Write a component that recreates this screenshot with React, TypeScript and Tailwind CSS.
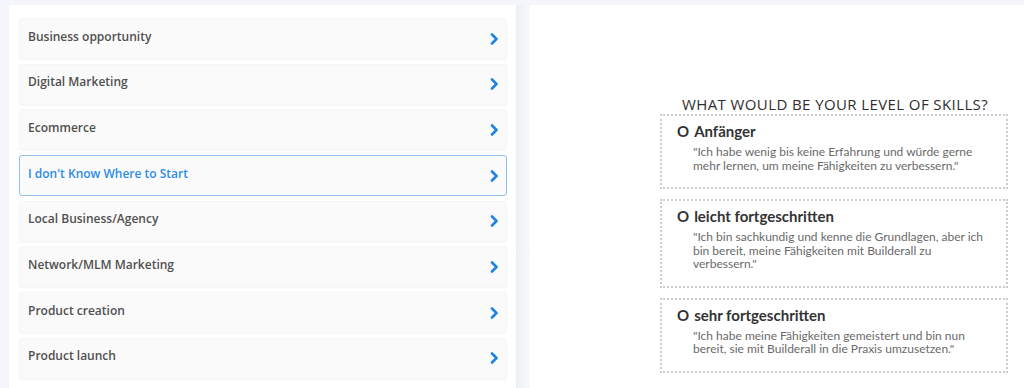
import React from "react";

const niches = [
  "Business opportunity",
  "Digital Marketing",
  "Ecommerce",
  "I don't Know Where to Start",
  "Local Business/Agency",
  "Network/MLM Marketing",
  "Product creation",
  "Product launch",
];

const levels = [
  {
    title: "Anfänger",
    text: "\"Ich habe wenig bis keine Erfahrung und würde gerne mehr lernen, um meine Fähigkeiten zu verbessern.\"",
  },
  {
    title: "leicht fortgeschritten",
    text: "\"Ich bin sachkundig und kenne die Grundlagen, aber ich bin bereit, meine Fähigkeiten mit Builderall zu verbessern.\"",
  },
  {
    title: "sehr fortgeschritten",
    text: "\"Ich habe meine Fähigkeiten gemeistert und bin nun bereit, sie mit Builderall in die Praxis umzusetzen.\"",
  },
];

function Chevron() {
  return (
    <svg width="9" height="12" viewBox="0 0 9 12" className="shrink-0">
      <polyline
        points="2,1.5 6.5,6 2,10.5"
        fill="none"
        stroke="#1f84e0"
        strokeWidth="2.6"
        strokeLinecap="round"
        strokeLinejoin="round"
      />
    </svg>
  );
}

function NicheItem({ label, active }: { label: string; active?: boolean }) {
  return (
    <div
      className={
        active
          ? "flex h-[41px] items-center justify-between rounded-[3px] border border-[#8fc0ee] bg-[#fbfbfb] pl-[8px] pr-[7px]"
          : "flex h-[41px] items-center justify-between rounded-[3px] border border-[#f6f6f6] bg-[#fafafa] pl-[8px] pr-[7px] shadow-[0_1px_2px_rgba(0,0,0,0.04)]"
      }
    >
      <span
        className={
          active
            ? "pb-[4px] text-[12px] font-semibold text-[#2d8ce6]"
            : "pb-[4px] text-[12px] font-semibold text-[#505050]"
        }
      >
        {label}
      </span>
      <Chevron />
    </div>
  );
}

export default function App() {
  return (
    <div
      className="flex h-[388px] w-[1024px] overflow-hidden bg-[#f4f6fb] pt-[5px]"
      style={{ fontFamily: "'Open Sans', Lato, sans-serif" }}
    >
      <aside className="ml-[9px] flex w-[507px] flex-col gap-[4.7px] bg-white pl-[10px] pr-[9px] pt-[13px]">
        {niches.map((n) => (
          <NicheItem key={n} label={n} active={n === "I don't Know Where to Start"} />
        ))}
      </aside>
      <div className="w-[14px] bg-gradient-to-r from-[#eceff5] to-[#f8f9fc]" />
      <main className="flex-1 bg-white pl-[130px] pt-[89px]">
        <div className="w-[348px]">
          <h2 className="pl-[22px] text-[15px] font-medium uppercase leading-[20px] tracking-[0.4px] text-[#2e2e2e]">
            What would be your level of skills?
          </h2>
          <div className="flex flex-col gap-[10px]" style={{ fontFamily: "Lato, 'Open Sans', sans-serif" }}>
            {levels.map((l) => (
              <div
                key={l.title}
                className="border-2 border-dotted border-[#c8cdd1] pb-[15px] pl-[15px] pr-[12px] pt-[6px]"
              >
                <div className="text-[15px] font-bold leading-[18px] text-[#333]">
                  <span className="mr-[5px]">O</span>
                  {l.title}
                </div>
                <p className="mt-[5px] pl-[16px] text-[12px] leading-[13.5px] text-[#6a6a6a]">{l.text}</p>
              </div>
            ))}
          </div>
        </div>
      </main>
    </div>
  );
}
